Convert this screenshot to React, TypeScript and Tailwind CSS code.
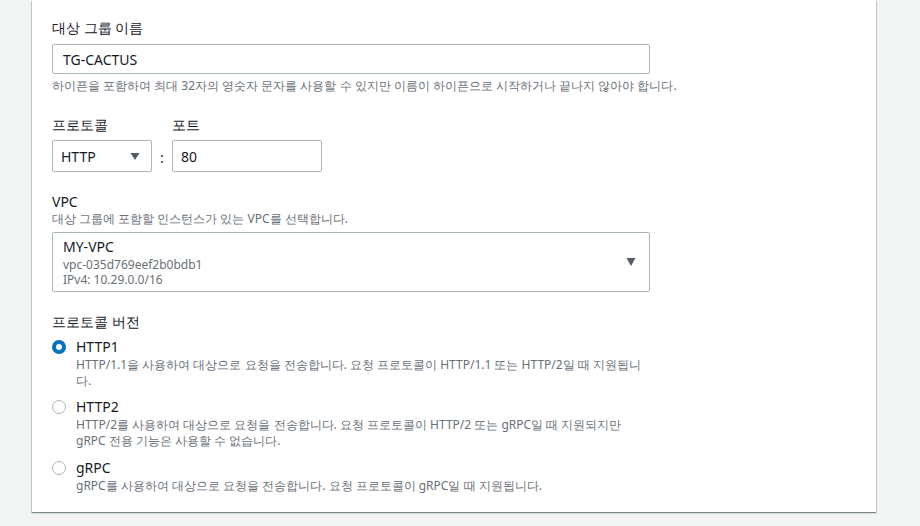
import React from "react";

const Arrow = ({ w = 10, h = 7 }: { w?: number; h?: number }) => (
  <svg width={w} height={h} viewBox={`0 0 ${w} ${h}`} className="shrink-0">
    <path d={`M0.5 0 H${w - 0.5} L${w / 2} ${h} Z`} fill="#545b64" />
  </svg>
);

const Radio = ({ checked }: { checked?: boolean }) =>
  checked ? (
    <div className="w-[14px] h-[14px] mt-[3px] rounded-full border-[4px] border-[#0073bb] bg-white shrink-0" />
  ) : (
    <div className="w-[14px] h-[14px] mt-[3px] rounded-full border-[1.5px] border-[#aab7b8] bg-white shrink-0" />
  );

const Option = ({
  checked,
  label,
  desc,
  className,
}: {
  checked?: boolean;
  label: string;
  desc: string;
  className?: string;
}) => (
  <div className={"flex gap-[10px] " + (className ?? "")}>
    <Radio checked={checked} />
    <div className="flex flex-col w-[574px]">
      <div className="text-[14px] leading-[20px] text-[#16191f]">{label}</div>
      <div className="text-[12px] leading-[16px] text-[#687078]">{desc}</div>
    </div>
  </div>
);

export default function App() {
  return (
    <div
      className="w-[920px] h-[526px] bg-[#f2f3f3] flex"
      style={{ fontFamily: "'Noto Sans', 'DejaVu Sans', sans-serif" }}
    >
      <div className="ml-[32px] w-[844px] h-[512px] bg-white shadow-[0_1px_1px_0_rgba(0,28,36,0.3),1px_1px_1px_0_rgba(0,28,36,0.15),-1px_1px_1px_0_rgba(0,28,36,0.15)] pl-[20px] pt-[17px] flex flex-col">
        <div className="text-[14px] leading-[22px] text-[#16191f]">대상 그룹 이름</div>
        <div className="mt-[5px] w-[598px] h-[30px] border border-[#aab7b8] rounded-[2px] px-[10px] flex items-center text-[14px] text-[#16191f]">
          TG-CACTUS
        </div>
        <div className="mt-[4px] text-[12px] leading-[16px] text-[#687078]">
          하이픈을 포함하여 최대 32자의 영숫자 문자를 사용할 수 있지만 이름이 하이픈으로 시작하거나 끝나지 않아야 합니다.
        </div>

        <div className="mt-[20px] flex items-end">
          <div className="flex flex-col w-[100px]">
            <div className="text-[14px] leading-[22px] text-[#16191f]">프로토콜</div>
            <div className="mt-[4px] h-[32px] border border-[#aab7b8] rounded-[2px] pl-[8px] pr-[11px] flex items-center justify-between text-[14px] text-[#16191f]">
              <span>HTTP</span>
              <Arrow w={10} h={7} />
            </div>
          </div>
          <div className="w-[20px] h-[32px] flex items-center justify-center text-[14px] text-[#16191f] pt-[2px]">:</div>
          <div className="flex flex-col w-[150px]">
            <div className="text-[14px] leading-[22px] text-[#16191f]">포트</div>
            <div className="mt-[4px] h-[32px] border border-[#aab7b8] rounded-[2px] px-[8px] flex items-center text-[14px] text-[#16191f]">
              80
            </div>
          </div>
        </div>

        <div className="mt-[21px] text-[14px] leading-[18px] text-[#16191f]">VPC</div>
        <div className="text-[12px] leading-[16px] text-[#687078]">
          대상 그룹에 포함할 인스턴스가 있는 VPC를 선택합니다.
        </div>
        <div className="mt-[5px] w-[598px] h-[60px] border border-[#aab7b8] rounded-[2px] pl-[10px] pr-[13px] flex items-center justify-between">
          <div className="flex flex-col">
            <div className="text-[14px] leading-[20px] text-[#16191f]">MY-VPC</div>
            <div className="text-[12px] leading-[15px] text-[#687078]">vpc-035d769eef2b0bdb1</div>
            <div className="text-[12px] leading-[15px] text-[#687078]">IPv4: 10.29.0.0/16</div>
          </div>
          <Arrow w={10} h={8} />
        </div>

        <div className="mt-[19px] text-[14px] leading-[22px] text-[#16191f]">프로토콜 버전</div>
        <Option
          className="mt-[4px]"
          checked
          label="HTTP1"
          desc="HTTP/1.1을 사용하여 대상으로 요청을 전송합니다. 요청 프로토콜이 HTTP/1.1 또는 HTTP/2일 때 지원됩니다."
        />
        <Option
          className="mt-[8px]"
          label="HTTP2"
          desc="HTTP/2를 사용하여 대상으로 요청을 전송합니다. 요청 프로토콜이 HTTP/2 또는 gRPC일 때 지원되지만 gRPC 전용 기능은 사용할 수 없습니다."
        />
        <Option
          className="mt-[9px]"
          label="gRPC"
          desc="gRPC를 사용하여 대상으로 요청을 전송합니다. 요청 프로토콜이 gRPC일 때 지원됩니다."
        />
      </div>
    </div>
  );
}
